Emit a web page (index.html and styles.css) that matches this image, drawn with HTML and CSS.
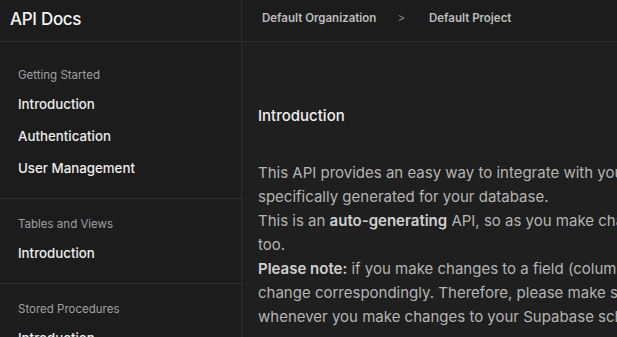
FILE: index.html
```html
<!DOCTYPE html>
<html lang="en">
<head>
    <meta charset="UTF-8">
    <meta name="viewport" content="width=device-width, initial-scale=1.0">
    <title>API Docs</title>
    <link rel="stylesheet" href="styles.css">
</head>
<body>
    <div class="layout">
        <aside class="sidebar">
            <div class="sidebar-header">
                <h1>API Docs</h1>
            </div>
            <nav>
                <div class="nav-section first">
                    <div class="nav-label">Getting Started</div>
                    <a href="#" class="nav-item">Introduction</a>
                    <a href="#" class="nav-item">Authentication</a>
                    <a href="#" class="nav-item">User Management</a>
                </div>
                <div class="nav-section">
                    <div class="nav-label">Tables and Views</div>
                    <a href="#" class="nav-item">Introduction</a>
                </div>
                <div class="nav-section">
                    <div class="nav-label">Stored Procedures</div>
                    <a href="#" class="nav-item">Introduction</a>
                </div>
            </nav>
        </aside>

        <main class="main">
            <header class="topbar">
                <span class="crumb">Default Organization</span>
                <span class="crumb-sep">&gt;</span>
                <span class="crumb">Default Project</span>
            </header>
            <section class="content">
                <h2>Introduction</h2>
                <p>This API provides an easy way to integrate with your Supabase database, which is<br>specifically generated for your database.</p>
                <p>This is an <strong>auto-generating</strong> API, so as you make changes to your database, the API will change<br>too.</p>
                <p><strong>Please note:</strong> if you make changes to a field (column) or table, the documentation and API will<br>change correspondingly. Therefore, please make sure to update your client code accordingly<br>whenever you make changes to your Supabase schema.</p>
            </section>
        </main>
    </div>
</body>
</html>
```

FILE: styles.css
```css
body {
    margin: 0;
    font-family: Inter, 'Noto Sans', sans-serif;
    background-color: #1f1f1f;
    color: #ededed;
    height: 100vh;
    overflow: hidden;
}
.layout {
    display: flex;
    height: 100%;
}
.sidebar {
    width: 241px;
    flex-shrink: 0;
    background-color: #1c1c1c;
    border-right: 1px solid #2e2e2e;
}
.sidebar-header {
    height: 42px;
    padding: 0 10px 4px;
    box-sizing: border-box;
    display: flex;
    align-items: center;
    border-bottom: 1px solid #2e2e2e;
}
.sidebar-header h1 {
    margin: 0;
    font-size: 17px;
    font-weight: 500;
    color: #f4f4f4;
    letter-spacing: -0.3px;
}
.nav-section {
    padding: 17px 18px 14px;
    border-bottom: 1px solid #2e2e2e;
    display: flex;
    flex-direction: column;
}
.nav-section.first {
    padding-top: 25px;
}
.nav-label {
    font-size: 11.5px;
    color: #a0a0a0;
    height: 17px;
    line-height: 17px;
    margin-bottom: 4px;
}
.nav-item {
    font-size: 13.3px;
    font-weight: 500;
    color: #ededed;
    text-decoration: none;
    height: 32px;
    line-height: 32px;
}
.main {
    flex: 1;
    min-width: 0;
    overflow: hidden;
}
.topbar {
    height: 42px;
    box-sizing: border-box;
    padding: 0 0 6px 20px;
    background-color: #1c1c1c;
    border-bottom: 1px solid #2e2e2e;
    display: flex;
    align-items: center;
    font-size: 11.5px;
    font-weight: 600;
    color: #bdbdbd;
}
.crumb-sep {
    margin: 0 24px 0 21px;
    font-weight: 400;
    color: #8a8a8a;
}
.content {
    padding: 62px 16px 0;
    white-space: nowrap;
}
.content h2 {
    margin: 0 0 33px;
    font-size: 15px;
    font-weight: 500;
    color: #ededed;
    line-height: 24px;
}
.content p {
    margin: 0;
    font-size: 15px;
    line-height: 24px;
    color: #b4b4b4;
}
.content strong {
    color: #d0d0d0;
    font-weight: 600;
}
```
